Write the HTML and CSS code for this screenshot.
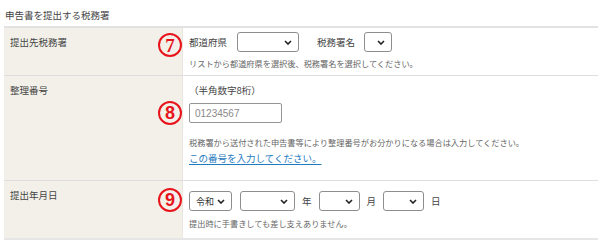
FILE: index.html
```html
<!DOCTYPE html>
<html lang="ja">
<head>
<meta charset="utf-8">
<title>申告書を提出する税務署</title>
<link rel="stylesheet" href="styles.css">
</head>
<body>
<div class="page">
  <div class="caption">申告書を提出する税務署</div>
  <div class="form">
    <div class="row r1">
      <div class="label">提出先税務署</div>
      <div class="field">
        <div class="line">
          <span class="mark m7">7</span>
          <span class="txt pref">都道府県</span>
          <span class="sel w62"><select></select><svg class="chev" viewBox="0 0 8 5" width="8" height="5"><path d="M1 1 L4 4 L7 1" fill="none" stroke="#222" stroke-width="1.6"/></svg></span>
          <span class="txt office">税務署名</span>
          <span class="sel w28"><select></select><svg class="chev" viewBox="0 0 8 5" width="8" height="5"><path d="M1 1 L4 4 L7 1" fill="none" stroke="#222" stroke-width="1.6"/></svg></span>
        </div>
        <div class="help h1">リストから都道府県を選択後、税務署名を選択してください。</div>
      </div>
    </div>
    <div class="row r2">
      <div class="label">整理番号</div>
      <div class="field">
        <div class="note">（半角数字8桁）</div>
        <div class="line">
          <span class="mark m8">8</span>
          <input class="num" type="text" placeholder="01234567">
        </div>
        <div class="help h2">税務署から送付された申告書等により整理番号がお分かりになる場合は入力してください。</div>
        <a class="link" href="#">この番号を入力してください。</a>
      </div>
    </div>
    <div class="row r3">
      <div class="label">提出年月日</div>
      <div class="field">
        <div class="line">
          <span class="mark m9">9</span>
          <span class="sel w43"><select class="era"><option>令和</option></select><svg class="chev" viewBox="0 0 8 5" width="8" height="5"><path d="M1 1 L4 4 L7 1" fill="none" stroke="#222" stroke-width="1.6"/></svg></span>
          <span class="sel w55 ml8"><select></select><svg class="chev" viewBox="0 0 8 5" width="8" height="5"><path d="M1 1 L4 4 L7 1" fill="none" stroke="#222" stroke-width="1.6"/></svg></span>
          <span class="txt unit">年</span>
          <span class="sel w41"><select></select><svg class="chev" viewBox="0 0 8 5" width="8" height="5"><path d="M1 1 L4 4 L7 1" fill="none" stroke="#222" stroke-width="1.6"/></svg></span>
          <span class="txt unit">月</span>
          <span class="sel w41"><select></select><svg class="chev" viewBox="0 0 8 5" width="8" height="5"><path d="M1 1 L4 4 L7 1" fill="none" stroke="#222" stroke-width="1.6"/></svg></span>
          <span class="txt unit">日</span>
        </div>
        <div class="help h3">提出時に手書きしても差し支えありません。</div>
      </div>
    </div>
  </div>
</div>
</body>
</html>
```

FILE: styles.css
```css
* { box-sizing: border-box; }
html, body { margin: 0; padding: 0; background: #fff; }
body {
  font-family: "Noto Sans CJK JP", "Noto Sans", sans-serif;
  color: #444;
  font-size: 9.5px;
}
.page { padding: 8px 2px 0 4px; }
.caption {
  line-height: 14px;
  padding-left: 1px;
  margin-bottom: 4px;
  color: #444;
}
.form {
  border-top: 2px solid #e2e2e2;
}
.row {
  display: grid;
  grid-template-columns: 179px 1fr;
  border-bottom: 1px solid #dedede;
}
.r1 { height: 48px; }
.r2 { height: 105px; }
.r3 { height: 59px; border-bottom: 2px solid #e6e6e6; }
.label {
  background: #f2f0e9;
  border-right: 1px solid #e8e6de;
  padding: 7px 0 0 6px;
  line-height: 14px;
  color: #444;
}
.r3 .label { padding-top: 7px; }
.field {
  padding-left: 6px;
  display: flex;
  flex-direction: column;
  align-items: flex-start;
}
.r1 .field { padding-top: 4px; }
.r2 .field { padding-top: 7px; }
.r3 .field { padding-top: 10px; }
.line {
  position: relative;
  display: flex;
  align-items: center;
  height: 20px;
}
.txt { line-height: 14px; }
.pref { margin-right: 10px; }
.office { margin-left: 18px; margin-right: 9px; }
.unit { margin: 0 7px 0 7px; }
.ml8 { margin-left: 8px; }
.sel {
  position: relative;
  display: inline-block;
  height: 20px;
}
.sel select {
  -webkit-appearance: none;
  appearance: none;
  width: 100%;
  height: 20px;
  border: 1px solid #8e8e8e;
  border-radius: 3px;
  background: #fff;
  font-family: "Noto Sans CJK JP", sans-serif;
  font-size: 9px;
  color: #333;
  padding: 0 0 0 6px;
  margin: 0;
  outline: none;
}
.chev {
  position: absolute;
  right: 7px;
  top: 8px;
  pointer-events: none;
}
.w62 { width: 62px; }
.w28 { width: 28px; }
.w43 { width: 43px; }
.w55 { width: 55px; }
.w41 { width: 41px; }
.num {
  width: 93px;
  height: 20px;
  border: 1px solid #959595;
  border-radius: 2px;
  padding: 0 5px;
  margin: 0;
  font-family: "Liberation Sans", Arial, sans-serif;
  font-size: 10px;
  color: #333;
  outline: none;
}
.num::placeholder { color: #8a8a8a; }
.note { line-height: 14px; margin-bottom: 6px; color: #444; }
.help {
  font-size: 8.2px;
  line-height: 12px;
  color: #666;
}
.h1 { margin-top: 5px; }
.h2 { margin-top: 13px; }
.h3 { margin-top: 6px; }
.link {
  margin-top: 3px;
  line-height: 14px;
  color: #1f7bc0;
  text-decoration: underline;
  text-underline-offset: 2px;
}
.mark {
  position: absolute;
  left: -31px;
  top: 50%;
  width: 24px;
  height: 24px;
  margin-top: -12px;
  border: 2px solid #e8141c;
  border-radius: 50%;
  color: #e8141c;
  display: flex;
  align-items: center;
  justify-content: center;
  font-weight: bold;
  font-size: 19px;
  line-height: 1;
}
.m7 { font-family: "Liberation Serif", "DejaVu Serif", serif; margin-top: -9px; }
.m8, .m9 { font-family: "Liberation Sans", "DejaVu Sans", sans-serif; font-size: 18px; }
.m9 { margin-top: -13px; }
```
